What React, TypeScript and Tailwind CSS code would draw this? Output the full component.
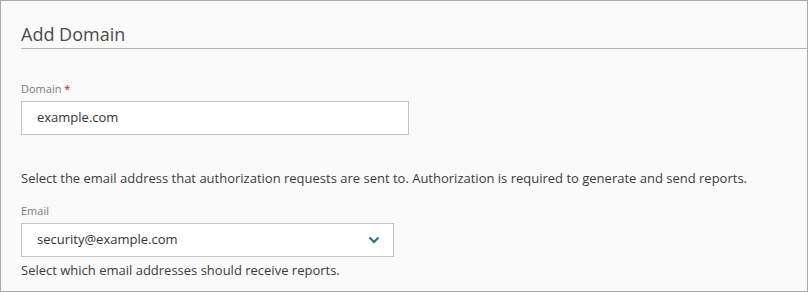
export default function App() {
  return (
    <div
      className="w-[808px] h-[292px] border border-[#ababab] bg-[#fafafa] pl-5 text-[#3c3c3c]"
      style={{ fontFamily: '"Open Sans", "Liberation Sans", sans-serif' }}
    >
      <div className="mt-[21px] pb-[2px] border-b border-[#b3b3b3]">
        <h1 className="text-[18px] leading-[24px] font-normal text-[#4a4a4a]">Add Domain</h1>
      </div>

      <label className="block mt-[32px] text-[11px] leading-[15px] text-[#7a7a7a]">
        Domain <span className="text-[#d0021b]">*</span>
      </label>
      <div className="mt-[5px] w-[388px] h-[34px] bg-white border border-[#c4c4c4] flex items-center pl-[15px] text-[13px] text-[#333]">
        example.com
      </div>

      <p className="mt-[34px] text-[13px] leading-[18px] text-[#3c3c3c]">
        Select the email address that authorization requests are sent to. Authorization is required to generate and send reports.
      </p>

      <label className="block mt-[16px] text-[11px] leading-[15px] text-[#7a7a7a]">Email</label>
      <div className="mt-[5px] w-[373px] h-[34px] bg-white border border-[#c4c4c4] flex items-center justify-between pl-[15px] pr-[12px] text-[13px] text-[#333]">
        <span>security@example.com</span>
        <svg width="12" height="8" viewBox="0 0 12 8" className="mr-[1px]">
          <polyline points="1.5,1.5 6,6 10.5,1.5" fill="none" stroke="#2b7486" strokeWidth="2.2" />
        </svg>
      </div>

      <p className="mt-[4px] text-[13px] leading-[18px] text-[#3c3c3c]">
        Select which email addresses should receive reports.
      </p>
    </div>
  );
}
